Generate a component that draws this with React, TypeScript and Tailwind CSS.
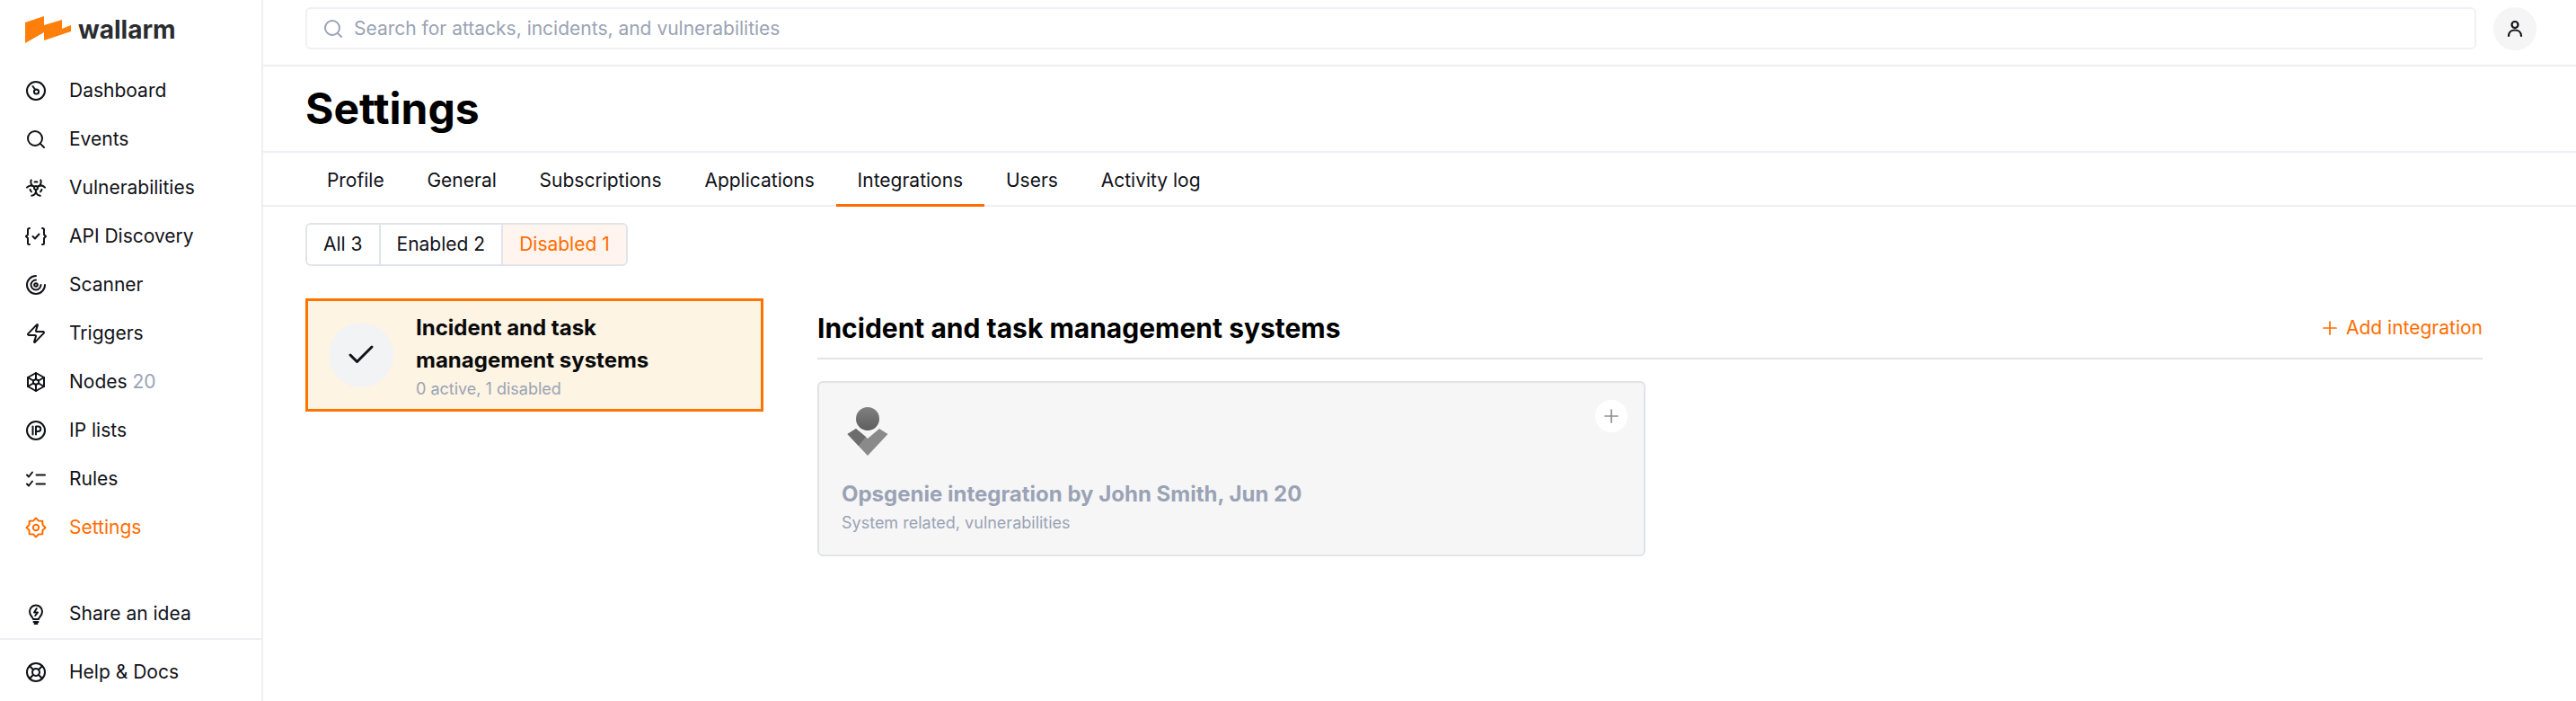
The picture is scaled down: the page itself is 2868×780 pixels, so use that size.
import { Biohazard, Check, LifeBuoy, Plus, Search, Zap } from "lucide-react"
import type { ReactNode } from "react"

const ICON = "w-6 h-6 shrink-0"

function SvgIcon({ children }: { children: ReactNode }) {
    return (
        <svg viewBox="0 0 24 24" fill="none" stroke="currentColor" strokeWidth="2" strokeLinecap="round" strokeLinejoin="round" className={ICON}>
            {children}
        </svg>
    )
}

const DashboardIcon = () => (
    <SvgIcon>
        <circle cx="12" cy="12" r="10" />
        <circle cx="12.5" cy="13" r="2.6" />
        <path d="M11 10.5 8.5 7" />
    </SvgIcon>
)

const ApiIcon = () => (
    <SvgIcon>
        <path d="M5 3H4.500A1.500 1.500 0 0 0 3 4.500V10l-2 2 2 2v5.500A1.500 1.500 0 0 0 4.500 21H5" />
        <path d="M19 3h.500A1.500 1.500 0 0 1 21 4.500V10l2 2-2 2v5.500a1.500 1.500 0 0 1-1.500 1.500H19" />
        <path d="m8.500 12 2.500 2.500 4.500-5" />
    </SvgIcon>
)

const ScannerIcon = () => (
    <SvgIcon>
        <path d="M12 2A10 10 0 1 0 22 12" />
        <path d="M12 6.500A5.500 5.500 0 1 0 17.500 12" />
        <circle cx="12" cy="12" r="1.800" />
    </SvgIcon>
)

const NodesIcon = () => (
    <SvgIcon>
        <path d="M12 2 21 7v10l-9 5-9-5V7z" />
        <path d="M12 2v7M12 15v7M3 7l6 3.500M21 7l-6 3.500M3 17l6-3.500M21 17l-6-3.500" />
        <path d="M12 9 15 10.500v3L12 15 9 13.500v-3z" />
    </SvgIcon>
)

const IpIcon = () => (
    <SvgIcon>
        <circle cx="12" cy="12" r="10" />
        <path d="M8.500 7.500v9" />
        <path d="M12 16.500v-9h2.500a2.800 2.800 0 0 1 0 5.600H12" />
    </SvgIcon>
)

const RulesIcon = () => (
    <SvgIcon>
        <path d="m2 7.500 2 2 4-5" />
        <path d="m2 17.500 2 2 4-5" />
        <path d="M12.500 7.500H22M12.500 17.500H22" />
    </SvgIcon>
)

const SettingsIcon = () => (
    <SvgIcon>
        <path d="M12 1.500 15 4.500 19.300 4.700 19.500 9 22.500 12 19.500 15 19.300 19.300 15 19.500 12 22.500 9 19.500 4.700 19.300 4.500 15 1.500 12 4.500 9 4.700 4.700 9 4.500Z" />
        <circle cx="12" cy="12" r="3.200" />
    </SvgIcon>
)

const IdeaIcon = () => (
    <SvgIcon>
        <path d="M9 18c0-2-4-3.500-4-8.500a7 7 0 0 1 14 0c0 5-4 6.500-4 8.500z" />
        <path d="M12.800 6 10 10.500h4L11.200 14" />
        <path d="M9.500 21h5M10.500 23h3" />
    </SvgIcon>
)

const NAV: { label: string; icon: ReactNode; count?: string; active?: boolean }[] = [
    { label: "Dashboard", icon: <DashboardIcon /> },
    { label: "Events", icon: <Search className={ICON} strokeWidth={2} /> },
    { label: "Vulnerabilities", icon: <Biohazard className={ICON} strokeWidth={2} /> },
    { label: "API Discovery", icon: <ApiIcon /> },
    { label: "Scanner", icon: <ScannerIcon /> },
    { label: "Triggers", icon: <Zap className={ICON} strokeWidth={2} /> },
    { label: "Nodes", icon: <NodesIcon />, count: "20" },
    { label: "IP lists", icon: <IpIcon /> },
    { label: "Rules", icon: <RulesIcon /> },
    { label: "Settings", icon: <SettingsIcon />, active: true },
]

const TABS = ["Profile", "General", "Subscriptions", "Applications", "Integrations", "Users", "Activity log"]

function NavItem({ label, icon, count, active }: { label: string; icon: ReactNode; count?: string; active?: boolean }) {
    return (
        <div className={`flex items-center gap-[25px] h-[54px] pl-7 text-[21px] ${active ? "text-[#ff6d00]" : "text-[#111217]"}`}>
            {icon}
            <span>
                {label}
                {count && <span className="text-[#9aa3b5]"> {count}</span>}
            </span>
        </div>
    )
}

export default function App() {
    return (
        <div className="flex h-[780px] w-[2868px] overflow-hidden bg-white font-['Inter',sans-serif] [font-optical-sizing:none] text-[#111217]">

            {/* SIDEBAR */}
            <aside className="flex flex-col w-[293px] shrink-0 border-r-2 border-[#eeeef4]">
                <div className="flex items-center gap-2 h-[74px] pl-7 pb-[8px]">
                    <svg viewBox="0 0 51 30" className="w-[51px] h-[30px] shrink-0">
                        <path d="M0 7 21 0v10l20-6v10l10-4v7L21 27v-9L0 30z" fill="#ff7f0a" />
                    </svg>
                    <span className="text-[28px] leading-none font-bold text-[#2a2c30]">wallarm</span>
                </div>
                <nav className="flex flex-col">
                    {NAV.map((item) => (
                        <NavItem key={item.label} {...item} />
                    ))}
                </nav>
                <div className="mt-auto">
                    <NavItem label="Share an idea" icon={<IdeaIcon />} />
                    <div className="border-t-2 border-[#eeeef4] pt-[9px] pb-[5px]">
                        <NavItem label="Help & Docs" icon={<LifeBuoy className={ICON} strokeWidth={2} />} />
                    </div>
                </div>
            </aside>

            {/* MAIN */}
            <main className="flex flex-col flex-1 min-w-0">

                <header className="flex items-start h-[74px] border-b-2 border-[#eeeef4] pl-[47px] pt-2">
                    <div className="flex items-center gap-[11px] w-[2417px] h-[47px] px-[17px] border-2 border-[#f0f1f4] rounded-md text-[21px] text-[#9aa3b5]">
                        <Search className="w-6 h-6" strokeWidth={2} />
                        <span>Search for attacks, incidents, and vulnerabilities</span>
                    </div>
                    <div className="flex items-center justify-center w-12 h-12 ml-[19px] rounded-full bg-[#f5f5f6]">
                        <svg viewBox="0 0 24 24" fill="none" stroke="#111217" strokeWidth="2.200" strokeLinecap="round" className="w-6 h-6">
                            <circle cx="12" cy="7.500" r="3.500" />
                            <path d="M5 20c0-4 3-6.500 7-6.500s7 2.500 7 6.500" />
                        </svg>
                    </div>
                </header>

                <div className="flex items-center h-[96px] border-b-2 border-[#eeeef4] pl-[47px]">
                    <h1 className="text-[48px] leading-none font-bold text-black">Settings</h1>
                </div>

                <div className="flex h-[60px] border-b-2 border-[#eeeef4] pl-[47px]">
                    {TABS.map((tab) => (
                        <div
                            key={tab}
                            className={`flex items-center h-[60px] px-[23.9px] pt-[4px] text-[21px] text-[#111217] border-b-[3px] ${tab === "Integrations" ? "border-[#ff6d00]" : "border-transparent"}`}
                        >
                            {tab}
                        </div>
                    ))}
                </div>

                <div className="flex-1 pl-[47px] pr-[104px] pt-[18px]">

                    {/* FILTER */}
                    <div className="flex w-fit h-[48px] border-2 border-[#e1e5ea] rounded-md overflow-hidden text-[21px]">
                        <div className="flex items-center px-[18px]">All 3</div>
                        <div className="flex items-center px-[18px] border-l-2 border-[#e1e5ea]">Enabled 2</div>
                        <div className="flex items-center px-[18px] border-l-2 border-[#e1e5ea] bg-[#fff4ee] text-[#ff6d00]">Disabled 1</div>
                    </div>

                    <div className="flex gap-[60px] mt-[36px]">

                        {/* CATEGORY */}
                        <div className="flex items-center gap-[25px] w-[510px] h-[126px] shrink-0 pl-[23px] border-[3px] border-[#ff7300] bg-[#fdf4e3]">
                            <div className="flex items-center justify-center w-[72px] h-[72px] rounded-full bg-[#f2f3f5]">
                                <Check className="w-9 h-9" strokeWidth={2} />
                            </div>
                            <div className="flex flex-col pt-[1px]">
                                <div className="text-[24px] leading-[36px] font-bold text-[#0a0a0c]">
                                    Incident and task<br />management systems
                                </div>
                                <div className="mt-[2px] text-[18px] leading-[24px] text-[#9aa3b5]">0 active, 1 disabled</div>
                            </div>
                        </div>

                        {/* INTEGRATIONS */}
                        <div className="flex-1 min-w-0">
                            <div className="flex items-center justify-between h-[68px] border-b-2 border-[#e1e5ea]">
                                <h2 className="text-[30px] font-bold text-black">Incident and task management systems</h2>
                                <div className="flex items-center gap-[6px] text-[21px] text-[#ff6d00]">
                                    <Plus className="w-6 h-6" strokeWidth={1.7} />
                                    Add integration
                                </div>
                            </div>

                            <div className="relative w-[922px] h-[195px] mt-6 pl-[25px] pt-[27px] border-2 border-[#dfe3e9] rounded-md bg-[#f6f6f7]">
                                <svg viewBox="0 0 46 54" className="w-[46px] h-[54px] ml-[6px]">
                                    <defs>
                                        <linearGradient id="ops" x1="0" y1="0" x2="0" y2="1">
                                            <stop offset="0" stopColor="#808080" />
                                            <stop offset="1" stopColor="#5e5e5e" />
                                        </linearGradient>
                                    </defs>
                                    <path d="M23 54 .5 30 10 24 23 35 36 24 45.500 30z" fill="#8a8a8a" />
                                    <path d="M.5 30 10 24 21 33 13 43z" fill="#6d6d6d" />
                                    <circle cx="23" cy="13" r="13" fill="url(#ops)" />
                                </svg>
                                <div className="mt-[27px] text-[24px] leading-[32px] font-bold text-[#9aa3b5]">Opsgenie integration by John Smith, Jun 20</div>
                                <div className="mt-[4px] text-[18px] leading-[24px] text-[#9aa3b5]">System related, vulnerabilities</div>
                                <div className="absolute top-[19px] right-[18px] flex items-center justify-center w-[36px] h-[36px] rounded-full bg-white text-[#8b8f98]">
                                    <Plus className="w-6 h-6" strokeWidth={1.7} />
                                </div>
                            </div>
                        </div>
                    </div>
                </div>
            </main>
        </div>
    )
}
